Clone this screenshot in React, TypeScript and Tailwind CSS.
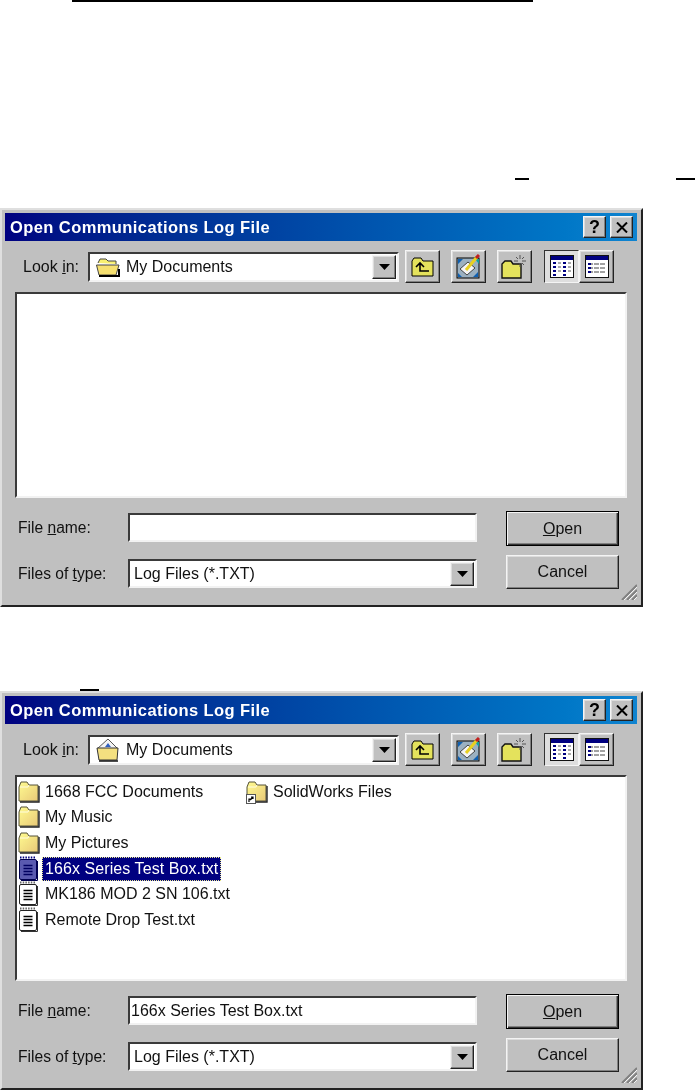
import * as React from "react";

const FONT = "font-['Liberation_Sans',Arial,sans-serif]";
const RAISED =
  "border border-t-[#f4f4f4] border-l-[#f4f4f4] border-r-[#222] border-b-[#222] shadow-[inset_-1px_-1px_0_#808080,inset_1px_1px_0_#dcdcdc]";
const SUNKEN =
  "border-2 border-t-[#3a3a3a] border-l-[#3a3a3a] border-r-[#f2f2f2] border-b-[#f2f2f2] bg-white";

function Folder({ id, className = "" }: { id: string; className?: string }) {
  return (
    <svg viewBox="0 0 22 24" width="22" height="24" className={className}>
      <defs>
        <linearGradient id={id} x1="0" y1="0" x2="1" y2="1">
          <stop offset="0" stopColor="#fffb90" />
          <stop offset="1" stopColor="#e8c878" />
        </linearGradient>
      </defs>
      <path d="M1 7 L1 21 L20 21 L20 5 L11 5 L9 2 L3 2 Z" fill={`url(#${id})`} stroke="#55523a" strokeWidth="1" />
      <path d="M2 7 L10 7 L11 5" fill="none" stroke="#fffde0" strokeWidth="1" />
      <path d="M21 6 L21 22 L2 22" fill="none" stroke="#222" strokeWidth="1.4" />
    </svg>
  );
}

function ShortcutFolder() {
  return (
    <span className="relative block h-6 w-[22px]">
      <Folder id="fold-short" />
      <span className="absolute bottom-0 left-0 flex h-[10px] w-[10px] items-center justify-center border border-[#555] bg-white">
        <svg viewBox="0 0 8 8" width="8" height="8">
          <path d="M2 7 L2 4 L5 4 M3 5 L6 2 M4 2 L6 2 L6 4" fill="none" stroke="#000" strokeWidth="1.2" />
        </svg>
      </span>
    </span>
  );
}

function TxtIcon({ selected = false }: { selected?: boolean }) {
  const fill = selected ? "#5a5ab0" : "#fff";
  const line = selected ? "#000060" : "#000";
  return (
    <svg viewBox="0 0 22 26" width="22" height="26">
      <rect x="1.5" y="3.5" width="17" height="20" rx="1.5" fill={fill} stroke={selected ? "#000050" : "#222"} />
      <path d="M19.5 5 L19.5 24.5 L3 24.5" fill="none" stroke={selected ? "#000050" : "#333"} />
      <path d="M2 1.5 H18" stroke={selected ? "#000080" : "#666"} strokeWidth="2" strokeDasharray="1.5 1.2" />
      <path d="M5.5 9.5 H14.5 M5.5 12.5 H14.5 M5.5 15.5 H14.5 M5.5 18.5 H14.5" stroke={line} strokeWidth="1.4" />
    </svg>
  );
}

function DropButton() {
  return (
    <span className={`flex h-full w-[24px] shrink-0 items-center justify-center bg-[#c0c0c0] ${RAISED}`}>
      <svg viewBox="0 0 11 6" width="11" height="6">
        <path d="M0 0 H11 L5.5 6 Z" fill="#000" />
      </svg>
    </span>
  );
}

function ToolButton({ pressed = false, children }: { pressed?: boolean; children: React.ReactNode }) {
  return (
    <span
      className={`flex h-[33px] w-[35px] items-center justify-center ${
        pressed
          ? "border border-t-[#333] border-l-[#333] border-r-[#f4f4f4] border-b-[#f4f4f4] bg-[#dedede]"
          : `bg-[#c0c0c0] ${RAISED}`
      }`}
    >
      {children}
    </span>
  );
}

function UpFolderIcon() {
  return (
    <svg viewBox="0 0 23 21" width="23" height="21">
      <path d="M1 5 L1 20 L22 20 L22 5 L12 5 L10 2 L3 2 Z" fill="#e4e25c" stroke="#000" />
      <path d="M5 11 L9 7 L13 11 M9 7 V15 H18" fill="none" stroke="#000" strokeWidth="1.6" />
    </svg>
  );
}

function DesktopIcon() {
  return (
    <svg viewBox="0 0 25 25" width="25" height="25">
      <rect x="1" y="4" width="22" height="20" fill="#9bb0c0" stroke="#000" />
      <path d="M2 5 H7 L2 10 Z M22 23 H17 L22 18 Z M2 23 H6 L2 19 Z" fill="#1060b0" />
      <path d="M19 5 H23 V10 Z" fill="#10a0a0" />
      <path d="M4 15 L12 8 L19 14 L11 21 Z" fill="#f4f4f4" stroke="#444" />
      <path d="M10 16 L21 3" stroke="#e8d020" strokeWidth="3" />
      <path d="M20 4 L23 1" stroke="#c02020" strokeWidth="3" />
    </svg>
  );
}

function NewFolderIcon() {
  return (
    <svg viewBox="0 0 27 25" width="27" height="25">
      <path d="M1 10 L1 24 L20 24 L20 10 L12 10 L10 7 L4 7 Z" fill="#e4e25c" stroke="#111" strokeWidth="1.4" />
      <path d="M19 1 V5 M19 9 V13 M13 7 H17 M21 7 H25 M15 3 L17 5 M23 3 L21 5 M23 11 L21 9" stroke="#555" strokeWidth="1" />
    </svg>
  );
}

function ListIcon() {
  return (
    <svg viewBox="0 0 24 23" width="24" height="23">
      <rect x="0.5" y="0.5" width="23" height="22" fill="#fff" stroke="#111" />
      <rect x="1" y="1" width="22" height="4" fill="#000080" />
      <path d="M3 8 H6 M3 12 H6 M3 16 H6 M3 20 H6 M13 8 H16 M13 12 H16 M13 16 H16 M13 20 H16" stroke="#000080" strokeWidth="2" />
      <path d="M8 8 H11 M8 12 H11 M8 16 H11 M18 8 H21 M18 12 H21 M18 16 H21" stroke="#555" strokeWidth="1" />
    </svg>
  );
}

function DetailsIcon() {
  return (
    <svg viewBox="0 0 24 23" width="24" height="23">
      <rect x="0.5" y="0.5" width="23" height="22" fill="#fff" stroke="#111" />
      <rect x="1" y="1" width="22" height="4" fill="#000080" />
      <path d="M3 9 H21 M3 13 H21 M3 17 H21" stroke="#444" strokeWidth="1" strokeDasharray="5 1" />
      <path d="M3 9 H6 M3 13 H6 M3 17 H6" stroke="#000080" strokeWidth="2" />
    </svg>
  );
}

function CaptionButton({ children }: { children: React.ReactNode }) {
  return (
    <span className={`flex h-[22px] w-[23px] items-center justify-center bg-[#c0c0c0] ${RAISED}`}>
      {children}
    </span>
  );
}

function HomeFolderIcon() {
  return (
    <svg viewBox="0 0 24 24" width="24" height="24">
      <path d="M1 11 L12 1 L22 11 Z" fill="#f4f4f4" stroke="#555" />
      <path d="M9 9 L12 5 L15 9 Z" fill="#3060c0" />
      <path d="M1 10 H22 L21 22 H3 Z" fill="#f4e080" stroke="#333" />
      <path d="M3 23 H22" stroke="#111" strokeWidth="1.5" />
    </svg>
  );
}

function OpenFolderIcon() {
  return (
    <svg viewBox="0 0 24 20" width="24" height="20">
      <path d="M2 6 L4 2 L10 2 L12 4 L20 4 L20 7" fill="#f8f070" stroke="#444" />
      <path d="M0.5 8 H18 L23 8 L20 18 H3 Z" fill="#f6e070" stroke="#444" />
      <path d="M3 19 H23 V12" fill="none" stroke="#000" strokeWidth="2" />
    </svg>
  );
}

function Dialog({
  lookIcon,
  fileName = "",
  children,
}: {
  lookIcon: React.ReactNode;
  fileName?: string;
  children?: React.ReactNode;
}) {
  return (
    <div className="relative h-[399px] w-[643px] border-2 border-t-[#dfdfdf] border-l-[#dfdfdf] border-r-[#222] border-b-[#222] bg-[#c0c0c0] text-[16px] leading-none text-[#111] blur-[0.4px]">
      <div className="mx-[3px] mt-[3px] flex h-[28px] w-[632px] items-center justify-between bg-gradient-to-r from-[#000080] to-[#1084d0] pl-[5px] pr-[4px]">
        <span className="text-[16.5px] font-bold tracking-[0.42px] text-white">Open Communications Log File</span>
        <span className="flex gap-[4px]">
          <CaptionButton>
            <span className="text-[18px] font-bold text-black">?</span>
          </CaptionButton>
          <CaptionButton>
            <svg viewBox="0 0 12 11" width="12" height="11">
              <path d="M1 0.5 L11 10.5 M11 0.5 L1 10.5" stroke="#000" strokeWidth="2" />
            </svg>
          </CaptionButton>
        </span>
      </div>

      <div className="mt-[9px] flex h-[33px] items-center pl-[21px]">
        <span className="w-[65px]">
          Look <u>i</u>n:
        </span>
        <div className={`flex h-[30px] w-[311px] items-center gap-[3px] pl-[3px] pr-[1px] ${SUNKEN}`}>
          <span className="flex w-[30px] justify-center">{lookIcon}</span>
          <span className="flex-1">My Documents</span>
          <span className="h-[24px]">
            <DropButton />
          </span>
        </div>
        <div className="ml-[6px] flex gap-[11px]">
          <ToolButton>
            <UpFolderIcon />
          </ToolButton>
          <ToolButton>
            <DesktopIcon />
          </ToolButton>
          <ToolButton>
            <NewFolderIcon />
          </ToolButton>
          <span className="ml-[1px] flex">
            <ToolButton pressed>
              <ListIcon />
            </ToolButton>
            <ToolButton>
              <DetailsIcon />
            </ToolButton>
          </span>
        </div>
      </div>

      <div className={`ml-[13px] mt-[9px] h-[206px] w-[612px] overflow-hidden ${SUNKEN}`}>{children}</div>

      <div className="flex pl-[16px]">
        <div className="mt-[15px] flex flex-col gap-[17px]">
          <div className="flex h-[29px] items-center">
            <span className="w-[110px] text-[15.6px]">
              File <u>n</u>ame:
            </span>
            <div className={`flex h-full w-[349px] items-center pl-[1px] ${SUNKEN}`}>{fileName}</div>
          </div>
          <div className="flex h-[29px] items-center">
            <span className="w-[110px] text-[15.6px]">
              Files of <u>t</u>ype:
            </span>
            <div className={`flex h-full w-[349px] items-center pl-[4px] pr-[1px] ${SUNKEN}`}>
              <span className="flex-1">Log Files (*.TXT)</span>
              <span className="h-[24px]">
                <DropButton />
              </span>
            </div>
          </div>
        </div>
        <div className="ml-[29px] mt-[13px] flex w-[113px] flex-col gap-[9px]">
          <span className="flex h-[35px] items-center justify-center border border-black bg-[#c0c0c0] shadow-[inset_1px_1px_0_#f4f4f4,inset_-1px_-1px_0_#333,inset_-2px_-2px_0_#808080]">
            <span>
              <u>O</u>pen
            </span>
          </span>
          <span className={`flex h-[34px] items-center justify-center bg-[#c0c0c0] ${RAISED}`}>Cancel</span>
        </div>
      </div>

      <svg viewBox="0 0 17 17" width="17" height="17" className="absolute bottom-[5px] right-[4px]">
        <path d="M17 2 L2 17 M17 7 L7 17 M17 12 L12 17" stroke="#808080" strokeWidth="2" />
        <path d="M17 4 L4 17 M17 9 L9 17 M17 14 L14 17" stroke="#f4f4f4" strokeWidth="1" />
      </svg>
    </div>
  );
}

function FileRow({ icon, label, selected = false }: { icon: React.ReactNode; label: string; selected?: boolean }) {
  return (
    <div className="flex h-[25.6px] items-center">
      <span className="flex w-[27px] shrink-0 justify-start">{icon}</span>
      {selected ? (
        <span className="-ml-[3px] whitespace-nowrap border border-dotted border-[#e8e890] bg-[#000080] py-[3px] pl-[2px] pr-[2px] tracking-[0.08px] text-white">
          {label}
        </span>
      ) : (
        <span className="whitespace-nowrap">{label}</span>
      )}
    </div>
  );
}

export default function App() {
  return (
    <div className={`h-[1091px] w-[695px] overflow-hidden bg-white ${FONT}`}>
      <div className="ml-[72px] h-[2px] w-[461px] bg-black" />
      <div className="mt-[176px] flex h-[2px]">
        <span className="ml-[515px] w-[14px] bg-black" />
        <span className="ml-[147px] w-[19px] bg-black" />
      </div>
      <div className="mt-[28px]">
        <Dialog lookIcon={<OpenFolderIcon />} />
      </div>
      <div className="ml-[80px] mt-[82px] h-[2px] w-[19px] bg-black" />
      <Dialog lookIcon={<HomeFolderIcon />} fileName="166x Series Test Box.txt">
        <div className="grid grid-flow-col grid-rows-6 grid-cols-[228px_1fr] pl-[1px] pt-[2px]">
          <FileRow icon={<Folder id="fold-a" />} label="1668 FCC Documents" />
          <FileRow icon={<Folder id="fold-b" />} label="My Music" />
          <FileRow icon={<Folder id="fold-c" />} label="My Pictures" />
          <FileRow icon={<TxtIcon selected />} label="166x Series Test Box.txt" selected />
          <FileRow icon={<TxtIcon />} label="MK186 MOD 2 SN 106.txt" />
          <FileRow icon={<TxtIcon />} label="Remote Drop Test.txt" />
          <FileRow icon={<ShortcutFolder />} label="SolidWorks Files" />
        </div>
      </Dialog>
    </div>
  );
}
